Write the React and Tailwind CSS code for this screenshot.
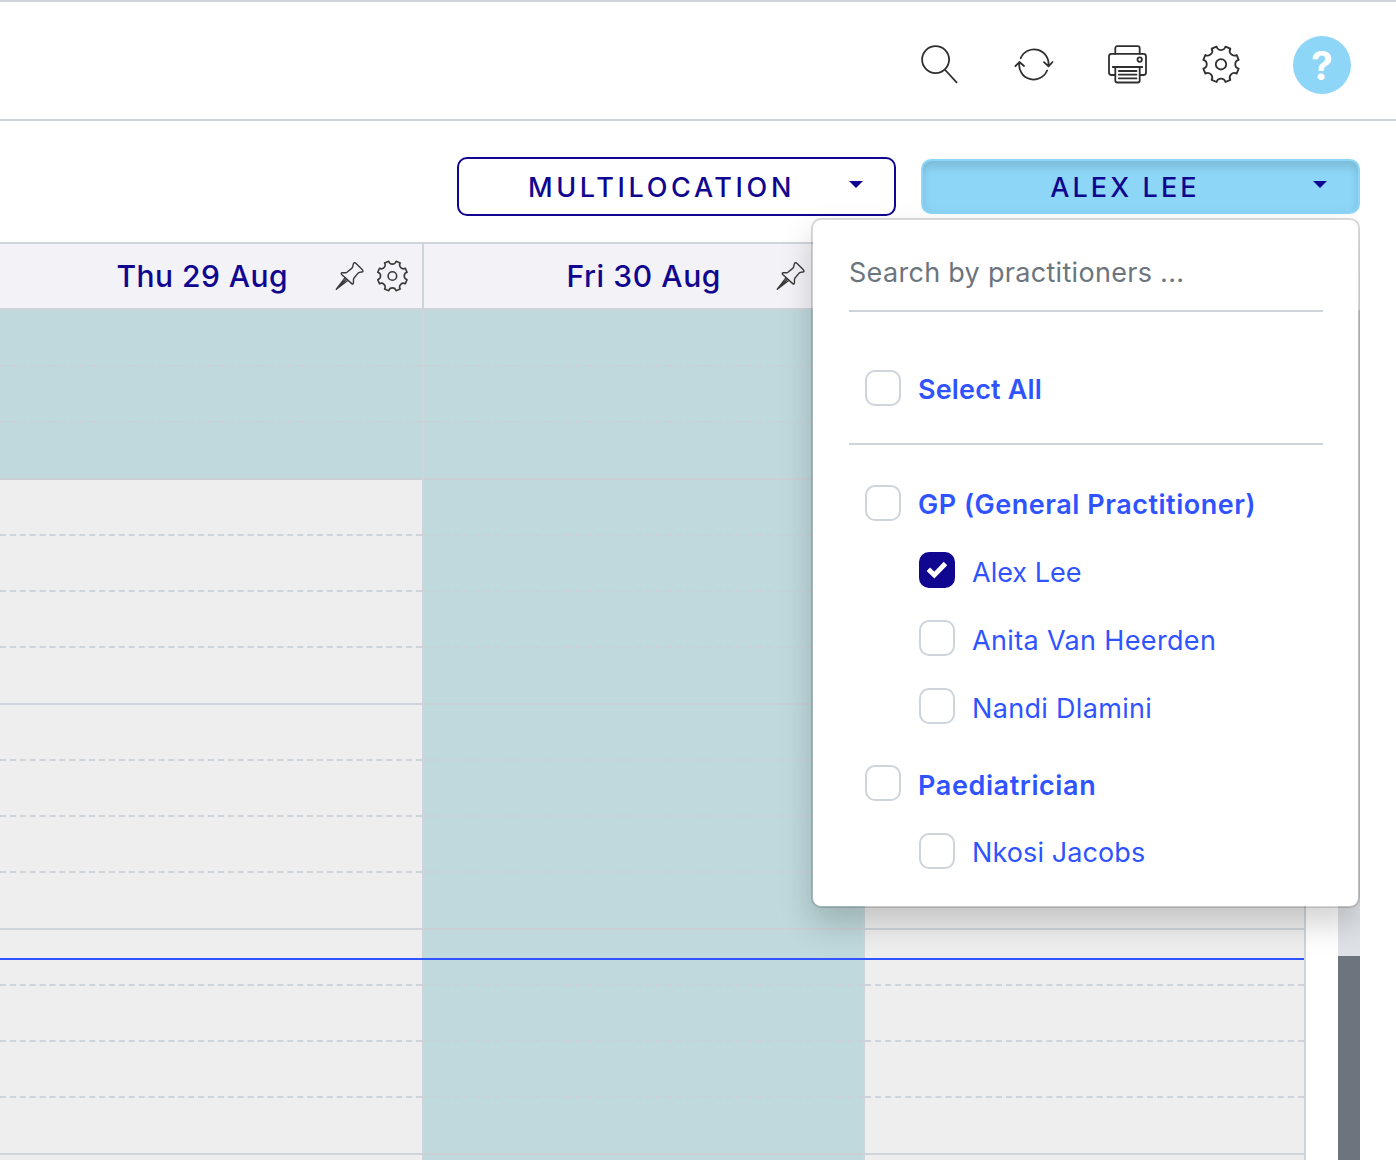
import React from 'react';
import clsx from 'clsx';

const GROUPS = [
  {
    name: 'GP (General Practitioner)',
    tracking: 'tracking-[0.52px]',
    className: 'mt-10',
    textTop: 'pt-[2px]',
    membersClass: 'mt-[31px]',
    members: [
      { name: 'Alex Lee', checked: true, tracking: 'tracking-normal' },
      { name: 'Anita Van Heerden', tracking: 'tracking-[0.35px]' },
      { name: 'Nandi Dlamini', tracking: 'tracking-[0.32px]' }
    ]
  },
  {
    name: 'Paediatrician',
    tracking: 'tracking-[0.6px]',
    className: 'mt-[41px]',
    textTop: 'pt-[3px]',
    membersClass: 'mt-8',
    members: [{ name: 'Nkosi Jacobs', tracking: 'tracking-[0.1px]', textTop: 'pt-[2px]' }]
  }
];

const SLOTS = Array.from({ length: 16 }, (_, i) => i);

// outline of an eight-toothed cog with a scooped notch between the teeth
const cogPath = (cx, cy, r) => {
  const point = (deg) => {
    const a = (deg * Math.PI) / 180;
    return `${(cx + r * Math.sin(a)).toFixed(2)} ${(cy - r * Math.cos(a)).toFixed(2)}`;
  };
  const notch = r * 0.25;
  let d = `M${point(-14)}`;
  for (let k = 0; k < 8; k++) {
    d += `A${notch} ${notch} 0 0 0 ${point(k * 45 + 14)}L${point(k * 45 + 31)}`;
  }
  return `${d}Z`;
};

const ToolIcon = ({ children }) => (
  <svg
    className="h-11 w-11 shrink-0"
    viewBox="0 0 44 44"
    fill="none"
    stroke="#2f2f2f"
    strokeWidth="1.8"
    strokeLinecap="round"
    strokeLinejoin="round"
  >
    {children}
  </svg>
);

const PinIcon = () => (
  <svg className="h-8 w-8" viewBox="0 0 32 32" fill="none" stroke="#3a3a3a" strokeWidth="1.4" strokeLinejoin="round" strokeLinecap="round">
    <path d="M19.6 3.2c.9-1 1.8-.4 3 .8l5.3 5.2c1.4 1.4 1.5 2.3.2 2.8-1.5.2-3 .3-4 1.100l-4.300 5.200c-.7 1.300-.2 3-.4 4.700-.1 1.300-.9 1.300-1.700.6L7.700 14.500c-.8-.9-.5-1.600.6-1.700 1.900-.1 3.300.2 4.600-.5l5.100-4.200c1-1.100.9-3.300 1.600-4.900Z" />
    <path d="M11 17.800 2.300 29.200l11.400-8.700M2.300 29.200l10-10" />
  </svg>
);

const SettingsIcon = () => (
  <svg className="h-8 w-8" viewBox="0 0 32 32" fill="none" stroke="#3a3a3a" strokeWidth="1.6" strokeLinejoin="round">
    <path d={cogPath(16.4, 16, 15.1)} />
    <circle cx="16.4" cy="16" r="4.3" />
  </svg>
);

const Caret = () => (
  <svg className="h-[7px] w-[14px]" viewBox="0 0 14 7" fill="#100690">
    <path d="M0 0h14L7 7Z" />
  </svg>
);

const Checkbox = ({ checked }) => (
  <span
    className={clsx(
      'flex h-9 w-9 shrink-0 items-center justify-center rounded-[10px] border-2',
      checked ? 'border-[#100690] bg-[#100690]' : 'border-[#ced4da] bg-white'
    )}
  >
    {checked && (
      <svg className="h-[18px] w-[22px]" viewBox="0 0 22 18" fill="none" stroke="#fff" strokeWidth="4.9">
        <path d="m2.300 8.300 6 5.800L19.500 2.500" />
      </svg>
    )}
  </span>
);

const Option = ({ label, checked, bold, tracking, textTop = 'pt-[3px]' }) => (
  <div className="flex h-9 gap-[17px]">
    <Checkbox checked={checked} />
    <span
      className={clsx(
        'whitespace-nowrap text-[27px] leading-9 text-[#2f54ff]',
        bold ? 'font-semibold' : 'font-normal',
        tracking,
        textTop
      )}
    >
      {label}
    </span>
  </div>
);

const DayColumn = ({ label, labelClass, width, openFrom, closed }) => (
  <div className={clsx('shrink-0 border-r-2 border-[#ced4da]', width)}>
    <div className="flex h-[68px] items-center justify-end border-y-2 border-[#ced4da] bg-[#f3f2f7] pr-[14px]">
      {label && (
        <>
          <span className={clsx('whitespace-nowrap text-[30px] font-medium text-[#100690]', labelClass)}>{label}</span>
          <PinIcon />
          <span className="ml-[10px]">
            <SettingsIcon />
          </span>
        </>
      )}
    </div>
    {SLOTS.map((i) => {
      const shaded = closed || i < openFrom;
      const hourEnd = i % 4 === 2;
      return (
        <div
          key={i}
          className={clsx(
            'border-b-2',
            hourEnd || i === 0 ? 'h-[57px]' : 'h-14',
            hourEnd ? 'border-solid' : 'border-dashed',
            shaded ? 'bg-[#bfd9dc]' : 'bg-[#eeeeee]',
            shaded ? (hourEnd ? 'border-[#cbd0d7]' : 'border-[#c8d2d8]') : 'border-[#ced4da]'
          )}
        />
      );
    })}
  </div>
);

const PractitionerMenu = () => (
  <div className="absolute left-[811px] top-[97px] h-[690px] w-[549px] rounded-[10px] border-2 border-black/15 bg-white bg-clip-padding pl-9 pr-[35px] shadow-[0_16px_32px_rgba(0,0,0,0.175)]">
    <input
      type="text"
      placeholder="Search by practitioners ..."
      className="mt-[20px] block h-[72px] w-full border-b-2 border-[#ced4da] pb-[6px] text-[27px] tracking-[0.3px] outline-none placeholder:text-[#6c757d]"
    />
    <div className="h-[133px] border-b-2 border-[#ced4da] pl-4 pt-[58px]">
      <Option label="Select All" bold tracking="tracking-[0.15px]" textTop="pt-[2px]" />
    </div>
    {GROUPS.map((group) => (
      <div key={group.name} className={clsx('pl-4', group.className)}>
        <Option label={group.name} bold tracking={group.tracking} textTop={group.textTop} />
        <div className={clsx('flex flex-col gap-8 pl-[54px]', group.membersClass)}>
          {group.members.map((member) => (
            <Option
              key={member.name}
              label={member.name}
              checked={member.checked}
              tracking={member.tracking}
              textTop={member.textTop}
            />
          ))}
        </div>
      </div>
    ))}
  </div>
);

export default function App() {
  return (
    <div className="flex h-[1160px] w-[1396px] flex-col overflow-hidden bg-white font-['Inter',sans-serif]">
      <header className="flex h-[121px] shrink-0 items-start justify-end gap-[50px] border-y-2 border-[#ced4da] pr-[45px] pt-[34px]">
        <div className="flex h-[58px] items-center gap-[50px]">
          <ToolIcon>
            <circle cx="18.6" cy="16.6" r="13.5" />
            <path d="m28.200 27 11.400 12.300" />
          </ToolIcon>
          <ToolIcon>
            <path d="M9.700 15.200A14.500 14.500 0 0 1 37.400 23M33 19.200l4.500 4.100 4-4.300" />
            <path d="M36.100 27.500A14.500 14.500 0 0 1 8.400 19.500M4.400 23.200l4-4.200 4.600 4" />
          </ToolIcon>
          <ToolIcon>
            <path d="M10.300 10.800V5.200a2 2 0 0 1 2-2h20.400a2 2 0 0 1 2 2v5.600" />
            <path d="M10 32H6.500A2.500 2.500 0 0 1 4 29.500V13.300a2.500 2.500 0 0 1 2.500-2.500h32a2.500 2.500 0 0 1 2.500 2.500v16.200a2.500 2.500 0 0 1-2.500 2.500H35" />
            <circle cx="34.700" cy="16.600" r="2.200" />
            <path d="M7.800 24h29.400M10.300 24v13.500a2 2 0 0 0 2 2h20.400a2 2 0 0 0 2-2V24M13.900 28h17.600M13.900 31.700h17.600M13.900 35.400h17.600" />
          </ToolIcon>
          <ToolIcon>
            <path d={cogPath(22, 21.3, 18.2)} />
            <circle cx="22" cy="21.300" r="5.200" />
          </ToolIcon>
        </div>
        <button className="flex h-[58px] w-[58px] items-center justify-center rounded-full bg-[#8dd6f7] text-[39px] font-bold leading-none text-white">
          ?
        </button>
      </header>

      {/* the menu shadow is cut off at the edge of the scrolling area */}
      <main className="relative w-[1360px] grow overflow-hidden">
        <div className="flex h-[121px] items-center justify-end gap-[25px] pt-[10px]">
          <button className="flex h-[59px] w-[439px] items-center rounded-[10px] border-2 border-[#100690] pr-[31px] text-[27px] font-medium text-[#100690]">
            <span className="grow pl-[15px] pt-[3px] text-center tracking-[3.650px]">MULTILOCATION</span>
            <span className="pb-[5px]">
              <Caret />
            </span>
          </button>
          <button className="flex h-[55px] w-[439px] items-center rounded-[10px] border-2 border-[#8dd6f7] bg-[#8dd6f7] pr-[31px] text-[27px] font-medium text-[#100690] shadow-[inset_0_6px_10px_rgba(0,0,0,0.125)]">
            <span className="grow pl-[14px] pt-[3px] text-center tracking-[3.100px]">ALEX LEE</span>
            <span className="pb-[5px]">
              <Caret />
            </span>
          </button>
        </div>

        <div className="relative flex">
          <DayColumn label="Thu 29 Aug" labelClass="mr-[46px] tracking-[0.45px]" width="w-[424px]" openFrom={3} />
          <DayColumn label="Fri 30 Aug" labelClass="mr-[54px] tracking-[0.6px]" width="w-[441px]" closed />
          <DayColumn width="w-[441px]" openFrom={3} />
          <div className="w-8 shrink-0" />
          <div className="flex w-[22px] shrink-0 flex-col pt-[68px]">
            <div className="h-[646px] bg-[#dee2e6]" />
            <div className="grow bg-[#6c757d]" />
          </div>
          <div className="absolute left-0 top-[716px] h-[2px] w-[1304px] bg-[#2f54ff]" />
        </div>

        <PractitionerMenu />
      </main>
    </div>
  );
}
